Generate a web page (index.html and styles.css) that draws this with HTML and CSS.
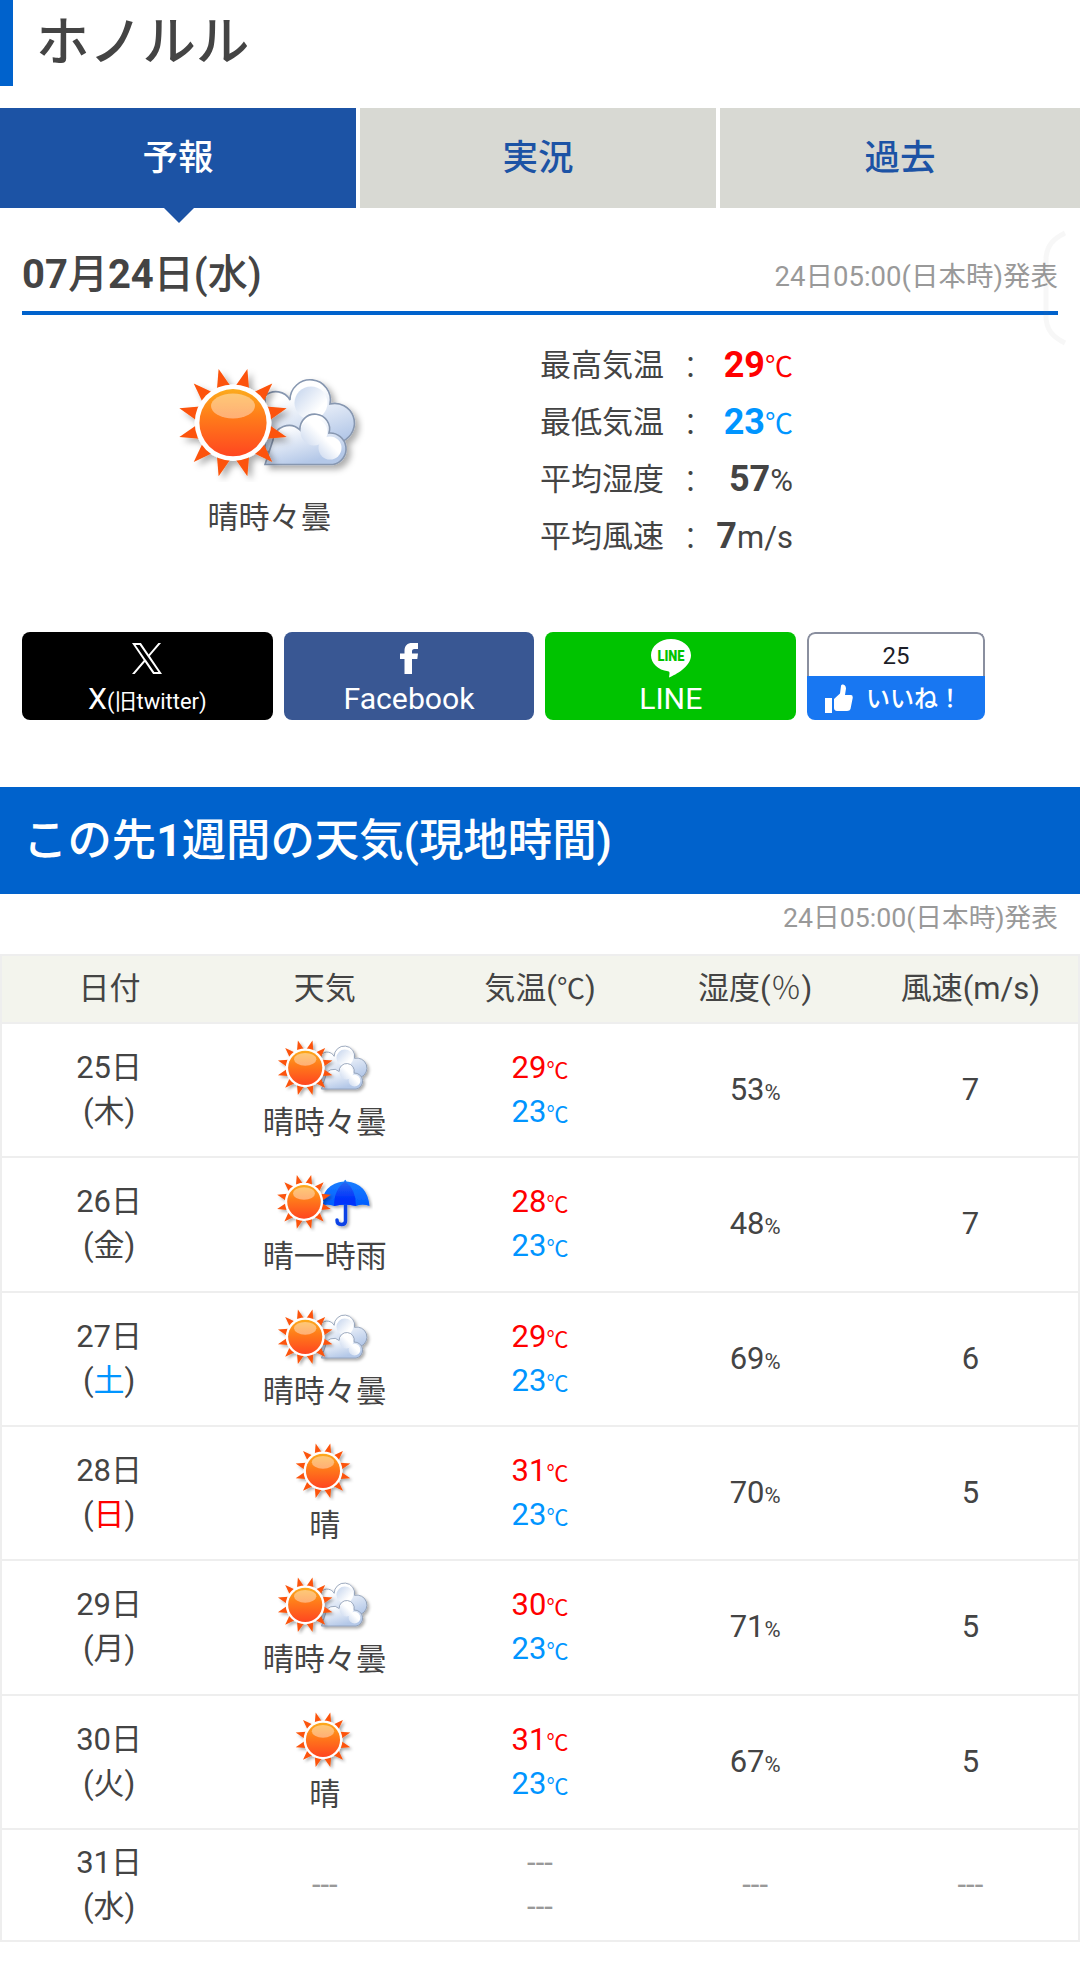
FILE: index.html
```html
<!DOCTYPE html>
<html lang="ja">
<head>
  <meta charset="UTF-8" />
  <meta name="viewport" content="width=device-width, initial-scale=1.0" />
  <title>ホノルルの天気</title>
  <link rel="stylesheet" href="styles.css">
</head>
<body>
  <!-- weather icon parts -->
  <svg class="defs" width="0" height="0" aria-hidden="true">
    <defs>
      <linearGradient id="sunFill" x1="0" y1="0" x2="0" y2="1">
        <stop offset="0" stop-color="#fcab1c" />
        <stop offset="0.4" stop-color="#ff7d1a" />
        <stop offset="1" stop-color="#ff4620" />
      </linearGradient>
      <linearGradient id="cloudFill" x1="0" y1="0" x2="0.4" y2="1">
        <stop offset="0.3" stop-color="#fff" />
        <stop offset="1" stop-color="#b4c8e8" />
      </linearGradient>
      <linearGradient id="puff" x1="0" y1="0" x2="1" y2="0.9">
        <stop offset="0" stop-color="#c3d3ec" />
        <stop offset="0.75" stop-color="#fff" />
      </linearGradient>
      <linearGradient id="puffFront" x1="1" y1="0" x2="0" y2="1">
        <stop offset="0.4" stop-color="#fff" />
        <stop offset="1" stop-color="#c9d7ee" />
      </linearGradient>
      <linearGradient id="umbrellaFill" x1="0" y1="0" x2="0" y2="1">
        <stop offset="0" stop-color="#1c80ff" />
        <stop offset="1" stop-color="#005cff" />
      </linearGradient>
      <linearGradient id="umbrellaMid" x1="0" y1="0" x2="0" y2="1">
        <stop offset="0" stop-color="#2a6af0" />
        <stop offset="0.7" stop-color="#0033fb" />
      </linearGradient>
      <filter id="shadow" x="-20%" y="-20%" width="150%" height="150%">
        <feDropShadow dx="4" dy="4" stdDeviation="3.2" flood-color="#000" flood-opacity="0.32" />
      </filter>
      <g id="sun">
        <g filter="url(#shadow)">
          <g id="rays" fill="#fc5208" transform="translate(58 60.7)">
            <path id="ray" d="M0-55.5L7-36H-7Z" transform="rotate(15)" />
            <use href="#ray" transform="rotate(30)" />
            <use href="#ray" transform="rotate(60)" />
            <use href="#ray" transform="rotate(90)" />
            <use href="#ray" transform="rotate(120)" />
            <use href="#ray" transform="rotate(150)" />
            <use href="#ray" transform="rotate(180)" />
            <use href="#ray" transform="rotate(210)" />
            <use href="#ray" transform="rotate(240)" />
            <use href="#ray" transform="rotate(270)" />
            <use href="#ray" transform="rotate(300)" />
            <use href="#ray" transform="rotate(330)" />
          </g>
          <circle cx="58" cy="60.7" r="38.3" fill="#fff" />
        </g>
        <circle cx="58" cy="60.7" r="33.6" fill="url(#sunFill)" />
        <ellipse cx="58" cy="44" rx="22" ry="12.5" fill="#fff" fill-opacity="0.4" />
      </g>
      <g id="cloud" stroke="#8797b0" stroke-width="1.6" filter="url(#shadow)">
        <path d="M90 90V34A16 16 0 0 1 115 38A20.200 20.200 0 1 1 155 42A19.700 19.700 0 0 1 168 79Z" fill="url(#cloudFill)" />
        <circle cx="136" cy="41" r="16.500" fill="url(#puff)" stroke="none" />
        <path d="M90 102.500L98 78A16 16 0 0 1 125 68A14.800 14.800 0 1 1 154 71A15.900 15.900 0 0 1 158 102.500Z" fill="url(#cloudFill)" />
        <circle cx="139" cy="70" r="13.500" fill="url(#puffFront)" stroke="none" />
        <circle cx="155" cy="86" r="11.500" fill="url(#puffFront)" stroke="none" />
      </g>
      <g id="umbrella" filter="url(#shadow)">
        <path d="M141 60V99Q141 106 133 106Q124 106 124 97" fill="none" stroke="#0b43e6" stroke-width="7" stroke-linecap="round" />
        <path d="M138 20Q140.500 13 143 20Q185 24 189 69Q175 64 162 69Q140 64 118 69Q104 64 92 69Q96 24 138 20Z" fill="url(#umbrellaFill)" />
        <path d="M140.500 20Q162 35 162 69Q140 63 118 69Q118 35 140.500 20Z" fill="url(#umbrellaMid)" />
      </g>
      <symbol id="fine" viewBox="0 0 120 120"><use href="#sun" /></symbol>
      <symbol id="fineCloud" viewBox="0 0 190 120"><use href="#cloud" /><use href="#sun" /></symbol>
      <symbol id="fineRain" viewBox="0 0 196 120"><use href="#umbrella" /><use href="#sun" /></symbol>
    </defs>
  </svg>

  <h1 class="place">ホノルル</h1>

  <nav class="tabs">
    <a class="tab active">予報</a>
    <a class="tab">実況</a>
    <a class="tab">過去</a>
  </nav>

  <section class="today">
    <header class="today-head">
      <h2><b>07</b>月<b>24</b>日(水)</h2>
      <span class="stamp">24日05:00(日本時)発表</span>
    </header>
    <div class="today-body">
      <div class="today-weather">
        <svg class="icon-large"><use href="#fineCloud" /></svg>
        <p>晴時々曇</p>
      </div>
      <dl class="today-data">
        <dt>最高気温</dt><dd class="sep">：</dd><dd class="high"><b>29</b><span class="deg">℃</span></dd>
        <dt>最低気温</dt><dd class="sep">：</dd><dd class="low"><b>23</b><span class="deg">℃</span></dd>
        <dt>平均湿度</dt><dd class="sep">：</dd><dd><b>57</b>%</dd>
        <dt>平均風速</dt><dd class="sep">：</dd><dd><b>7</b>m/s</dd>
      </dl>
    </div>
  </section>

  <div class="share">
    <a class="share-btn x">
      <svg width="30" height="31" viewBox="0 0 24 24.500" preserveAspectRatio="none"><path fill="#fff" d="M14.280 10.360L23.220 0H21.100L13.340 9L7.150 0H0L9.370 13.600L0 24.500H2.120L10.310 14.980L16.850 24.500H24L14.280 10.360ZM11.380 13.730L10.430 12.380L2.880 1.590H6.140L12.230 10.300L13.180 11.650L21.100 22.980H17.840L11.380 13.730Z" /></svg>
      <span>X<small>(旧twitter)</small></span>
    </a>
    <a class="share-btn facebook">
      <svg width="18" height="31" viewBox="0 0 18 31"><path fill="#fff" d="M4.500 31V16H0V10.500H4.500V8C4.500 2.500 7.500 0 12 0H18V6H14.500C12.500 6 12 7 12 8.500V10.500H18L17.300 16H12V31Z" /></svg>
      <span>Facebook</span>
    </a>
    <a class="share-btn line">
      <svg width="40" height="39" viewBox="0 0 40 39"><path fill="#fff" d="M20 0C9 0 0 7.200 0 16.200C0 24.300 7 31 17 32.300C19 32.700 18.700 34 18 38.500C25 35.500 40 27.500 40 16.200C40 7.200 31 0 20 0Z" /><text class="line-mark" x="20" y="21.800" text-anchor="middle" textLength="27" lengthAdjust="spacingAndGlyphs">LINE</text></svg>
      <span>LINE</span>
    </a>
    <a class="like">
      <span class="like-count">25</span>
      <span class="like-label">
        <svg width="28" height="29" viewBox="0 0 28 29"><path fill="#fff" d="M0 14H7V29H0ZM9 15L15 9.500L16 2C16.200-0.500 21 0 21 4.500L20 11H26Q28 11 27.700 14L25.500 25Q25 27 22 27H12Q9 26.500 9 24Z" /></svg>
        いいね！
      </span>
    </a>
  </div>

  <section class="weekly">
    <h2 class="weekly-title">この先<b>1</b>週間の天気(現地時間)</h2>
    <p class="stamp weekly-stamp">24日05:00(日本時)発表</p>
    <table class="forecast">
      <thead>
        <tr><th>日付</th><th>天気</th><th>気温(<span class="deg">℃</span>)</th><th>湿度(<span class="pct">％</span>)</th><th>風速(m/s)</th></tr>
      </thead>
      <tbody>
        <tr>
          <td>25日<br>(木)</td>
          <td><svg class="icon"><use href="#fineCloud" /></svg>晴時々曇</td>
          <td><span class="high">29<small>℃</small></span><br><span class="low">23<small>℃</small></span></td>
          <td>53<small>%</small></td>
          <td>7</td>
        </tr>
        <tr>
          <td>26日<br>(金)</td>
          <td><svg class="icon"><use href="#fineRain" /></svg>晴一時雨</td>
          <td><span class="high">28<small>℃</small></span><br><span class="low">23<small>℃</small></span></td>
          <td>48<small>%</small></td>
          <td>7</td>
        </tr>
        <tr>
          <td>27日<br>(<span class="low">土</span>)</td>
          <td><svg class="icon"><use href="#fineCloud" /></svg>晴時々曇</td>
          <td><span class="high">29<small>℃</small></span><br><span class="low">23<small>℃</small></span></td>
          <td>69<small>%</small></td>
          <td>6</td>
        </tr>
        <tr>
          <td>28日<br>(<span class="high">日</span>)</td>
          <td><svg class="icon"><use href="#fine" /></svg>晴</td>
          <td><span class="high">31<small>℃</small></span><br><span class="low">23<small>℃</small></span></td>
          <td>70<small>%</small></td>
          <td>5</td>
        </tr>
        <tr>
          <td>29日<br>(月)</td>
          <td><svg class="icon"><use href="#fineCloud" /></svg>晴時々曇</td>
          <td><span class="high">30<small>℃</small></span><br><span class="low">23<small>℃</small></span></td>
          <td>71<small>%</small></td>
          <td>5</td>
        </tr>
        <tr>
          <td>30日<br>(火)</td>
          <td><svg class="icon"><use href="#fine" /></svg>晴</td>
          <td><span class="high">31<small>℃</small></span><br><span class="low">23<small>℃</small></span></td>
          <td>67<small>%</small></td>
          <td>5</td>
        </tr>
        <tr class="nodata">
          <td>31日<br>(水)</td>
          <td class="none">---</td>
          <td class="none">---<br>---</td>
          <td class="none">---</td>
          <td class="none">---</td>
        </tr>
      </tbody>
    </table>
  </section>

  <!-- edge panel handle -->
  <svg class="handle" width="30" height="116" viewBox="0 0 30 116"><path d="M24 3C12 9 5 16 5 30V86C5 100 12 107 24 113" /></svg>
</body>
</html>
```
FILE: styles.css
```css
* {
  box-sizing: border-box;
}
body {
  margin: 0;
  position: relative;
  min-height: 1962px;
  background: #fff;
  color: #444;
  font-family: Roboto, "Noto Sans CJK JP", sans-serif;
  font-size: 31px;
  line-height: 44px;
}
h1, h2, p, dl, dd {
  margin: 0;
}
small {
  line-height: 0;
}
.defs {
  display: block;
}
.high {
  color: #f00;
}
.low {
  color: #0095ff;
}
.deg {
  font-size: 28px;
  line-height: 0;
}
.pct {
  font-weight: 300;
}
.stamp {
  color: #999;
  font-size: 27.5px;
}

/* title */
.place {
  height: 86px;
  padding-left: 23px;
  border-left: 13px solid #0062cc;
  font-size: 53.300px;
  font-weight: 500;
  line-height: 86px;
}

/* tabs */
.tabs {
  display: grid;
  grid-template-columns: 356px 356px 360px;
  gap: 4px;
  margin-top: 22px;
}
.tab {
  position: relative;
  height: 100px;
  background: #d8d9d3;
  color: #1c53a5;
  font-size: 35.500px;
  font-weight: 500;
  line-height: 100px;
  text-align: center;
}
.tab.active {
  background: #1c53a5;
  color: #fff;
}
.tab.active::after {
  content: "";
  position: absolute;
  top: 100%;
  left: 50%;
  margin-left: -14px;
  border: 15px solid transparent;
  border-top-color: #1c53a5;
  border-bottom: 0;
}

/* today */
.today {
  padding: 0 22px;
}
.today-head {
  display: flex;
  justify-content: space-between;
  align-items: center;
  height: 107px;
  padding-top: 34px;
  border-bottom: 4px solid #0062cc;
}
.today-head h2 {
  font-size: 40px;
  font-weight: 500;
  line-height: 60px;
  margin-top: -4px;
}
.today-body {
  display: flex;
  height: 317px;
  padding-top: 22px;
}
.today-weather {
  width: 495px;
  padding-top: 25px;
  text-align: center;
}
.icon-large {
  display: block;
  width: 190px;
  height: 120px;
  margin: 0 auto 14px;
}
.today-data {
  display: grid;
  grid-template-columns: 135px 30px 88px;
  grid-auto-rows: 57px;
  margin-left: 23px;
  line-height: 57px;
}
.today-data dd {
  text-align: right;
  white-space: nowrap;
}
.today-data .sep {
  padding-top: 2px;
  font-weight: 300;
}
.today-data b {
  font-size: 36px;
}

/* share buttons */
.share {
  display: flex;
  gap: 11px;
  padding-left: 22px;
}
.share-btn {
  display: flex;
  flex-direction: column;
  align-items: center;
  justify-content: space-between;
  width: 250.700px;
  height: 88px;
  padding-top: 11px;
  border-radius: 8px;
  color: #fff;
  font-size: 30.200px;
  line-height: 42px;
}
.share-btn small {
  font-size: 22px;
}
.x {
  background: #000;
}
.facebook {
  background: #395793;
}
.line {
  background: #00c300;
  padding-top: 7px;
}
.line svg {
  margin-bottom: -2px;
}
.line-mark {
  fill: #00c300;
  font-size: 14px;
  font-weight: 900;
}
.like {
  display: flex;
  flex-direction: column;
  width: 178px;
  height: 88px;
  border-radius: 8px;
  overflow: hidden;
  font-size: 24px;
  text-align: center;
}
.like-count {
  height: 44px;
  border: 2px solid #8a8f9f;
  border-bottom: 0;
  border-radius: 8px 8px 0 0;
  color: #1c1e28;
}
.like-label {
  display: flex;
  gap: 13px;
  height: 44px;
  padding-left: 18px;
  background: #1877f2;
  color: #fff;
  font-weight: 500;
  line-height: 46px;
  white-space: nowrap;
}
.like-label svg {
  flex: none;
  margin-top: 8px;
}

/* weekly forecast */
.weekly {
  margin-top: 67px;
}
.weekly-title {
  height: 107px;
  padding-left: 23px;
  background: #0062cc;
  color: #fff;
  font-size: 44.400px;
  font-weight: 500;
  line-height: 108px;
}
.weekly-stamp {
  height: 60px;
  padding-right: 22px;
  font-size: 26.700px;
  line-height: 48px;
  text-align: right;
}
.forecast {
  width: 100%;
  border: 2px solid #eee;
  border-bottom: 0;
  border-spacing: 0;
  table-layout: fixed;
  text-align: center;
}
.forecast th {
  height: 68px;
  padding: 0;
  border-bottom: 2px solid #eee;
  background: #f3f4ed;
  font-weight: 400;
}
.forecast td {
  height: 134.330px;
  padding: 0;
  border-bottom: 2px solid #eee;
}
.forecast .nodata td {
  height: 112px;
}
.forecast td:first-child {
  padding-right: 1px;
}
.forecast small {
  font-size: 22px;
}
.forecast .none {
  color: #999;
}
.icon {
  display: block;
  width: 100px;
  height: 61px;
  margin: 2px auto 3px;
  padding-right: 2px;
}

.handle {
  position: absolute;
  top: 230px;
  left: 1041px;
  fill: none;
  stroke: rgba(120, 120, 120, 0.06);
  stroke-width: 5;
}
```
